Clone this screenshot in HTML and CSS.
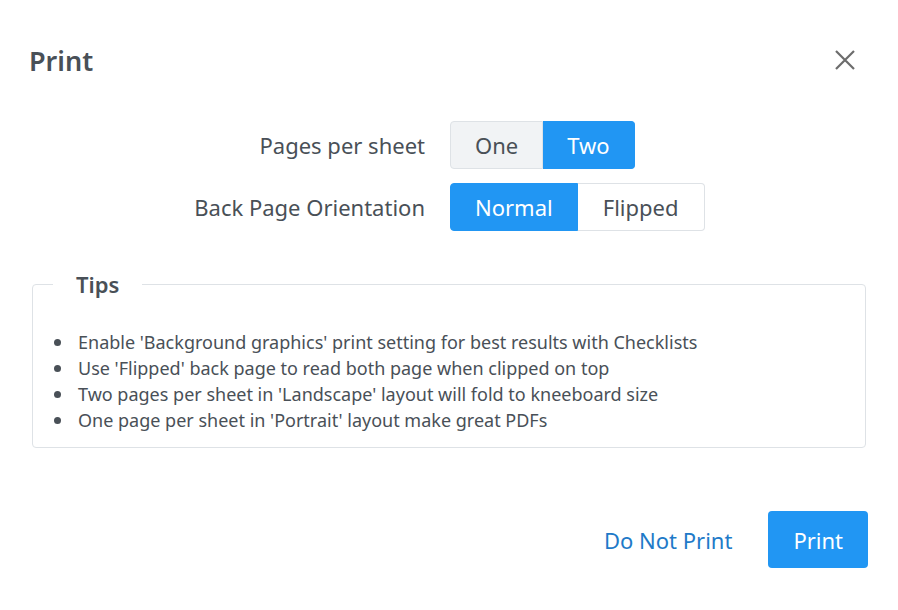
FILE: index.html
```html
<!DOCTYPE html>
<html lang="en">
<head>
    <meta charset="UTF-8">
    <title>Print</title>
    <link rel="stylesheet" href="styles.css">
</head>
<body>
    <div class="print-dialog">
        <div class="dialog-header">
            <h2 class="dialog-title">Print</h2>
            <button class="close-button" aria-label="Close">
                <svg width="22" height="22" viewBox="0 0 22 22">
                    <path d="M2 2 L20 20 M20 2 L2 20" stroke="#6c6c6c" stroke-width="2.2" fill="none"/>
                </svg>
            </button>
        </div>

        <div class="options">
            <span class="option-label">Pages per sheet</span>
            <div class="btn-group">
                <button class="seg seg-light">One</button>
                <button class="seg seg-active">Two</button>
            </div>

            <span class="option-label">Back Page Orientation</span>
            <div class="btn-group">
                <button class="seg seg-active">Normal</button>
                <button class="seg seg-outline">Flipped</button>
            </div>
        </div>

        <fieldset class="tips">
            <legend>Tips</legend>
            <ul>
                <li>Enable 'Background graphics' print setting for best results with Checklists</li>
                <li>Use 'Flipped' back page to read both page when clipped on top</li>
                <li>Two pages per sheet in 'Landscape' layout will fold to kneeboard size</li>
                <li>One page per sheet in 'Portrait' layout make great PDFs</li>
            </ul>
        </fieldset>

        <div class="dialog-footer">
            <button class="link-button">Do Not Print</button>
            <button class="primary-button">Print</button>
        </div>
    </div>
</body>
</html>
```

FILE: styles.css
```css
body, html {
    margin: 0;
    padding: 0;
    background: #ffffff;
    font-family: 'Noto Sans', 'Open Sans', sans-serif;
    color: #495057;
}

.print-dialog {
    width: 898px;
    height: 610px;
    box-sizing: border-box;
}

.dialog-header {
    display: flex;
    justify-content: space-between;
    align-items: center;
    padding: 41px 42px 0 29px;
}

.dialog-title {
    margin: 0;
    font-size: 27px;
    font-weight: 600;
    color: #495057;
    line-height: 40px;
}

.close-button {
    background: none;
    border: none;
    padding: 0;
    margin-top: -3px;
    cursor: pointer;
    display: flex;
}

.options {
    display: grid;
    grid-template-columns: 425px auto;
    column-gap: 25px;
    row-gap: 14px;
    align-items: center;
    margin-top: 40px;
}

.option-label {
    text-align: right;
    font-size: 22px;
    color: #495057;
}

.btn-group {
    display: flex;
    justify-self: start;
}

.seg {
    font-family: inherit;
    font-size: 22px;
    height: 48px;
    padding: 0 24px;
    border: 1px solid #dee2e6;
    cursor: pointer;
}

.seg:first-child {
    border-radius: 4px 0 0 4px;
}

.seg:last-child {
    border-radius: 0 4px 4px 0;
    border-left: none;
}

.seg-light {
    background: #f1f3f5;
    color: #495057;
}

.seg-outline {
    background: #ffffff;
    color: #495057;
    padding: 0 25px;
}

.seg-active {
    background: #2196f3;
    border-color: #2196f3;
    color: #ffffff;
}

.tips {
    margin: 38px 32px 0 32px;
    padding: 0 20px 14px 20px;
    border: 1px solid #dee2e6;
    border-radius: 4px;
}

.tips legend {
    margin-left: 0;
    padding: 0 23px;
    font-size: 22px;
    font-weight: 600;
    line-height: 30px;
    color: #495057;
}

.tips ul {
    list-style: none;
    margin: 30px 0 0 0;
    padding-left: 25px;
    font-size: 18px;
    line-height: 26px;
    color: #495057;
}

.tips li {
    position: relative;
}

.tips li::before {
    content: "";
    position: absolute;
    left: -24px;
    top: 10px;
    width: 7px;
    height: 7px;
    border-radius: 50%;
    background: #495057;
}

.dialog-footer {
    display: flex;
    justify-content: flex-end;
    align-items: center;
    gap: 36px;
    padding: 63px 30px 0 0;
}

.link-button {
    background: none;
    border: none;
    padding: 0;
    font-family: inherit;
    font-size: 22px;
    color: #1e7ac8;
    cursor: pointer;
}

.primary-button {
    background: #2196f3;
    border: none;
    border-radius: 4px;
    color: #ffffff;
    font-family: inherit;
    font-size: 22px;
    height: 57px;
    padding: 0 25px;
    cursor: pointer;
}
```
